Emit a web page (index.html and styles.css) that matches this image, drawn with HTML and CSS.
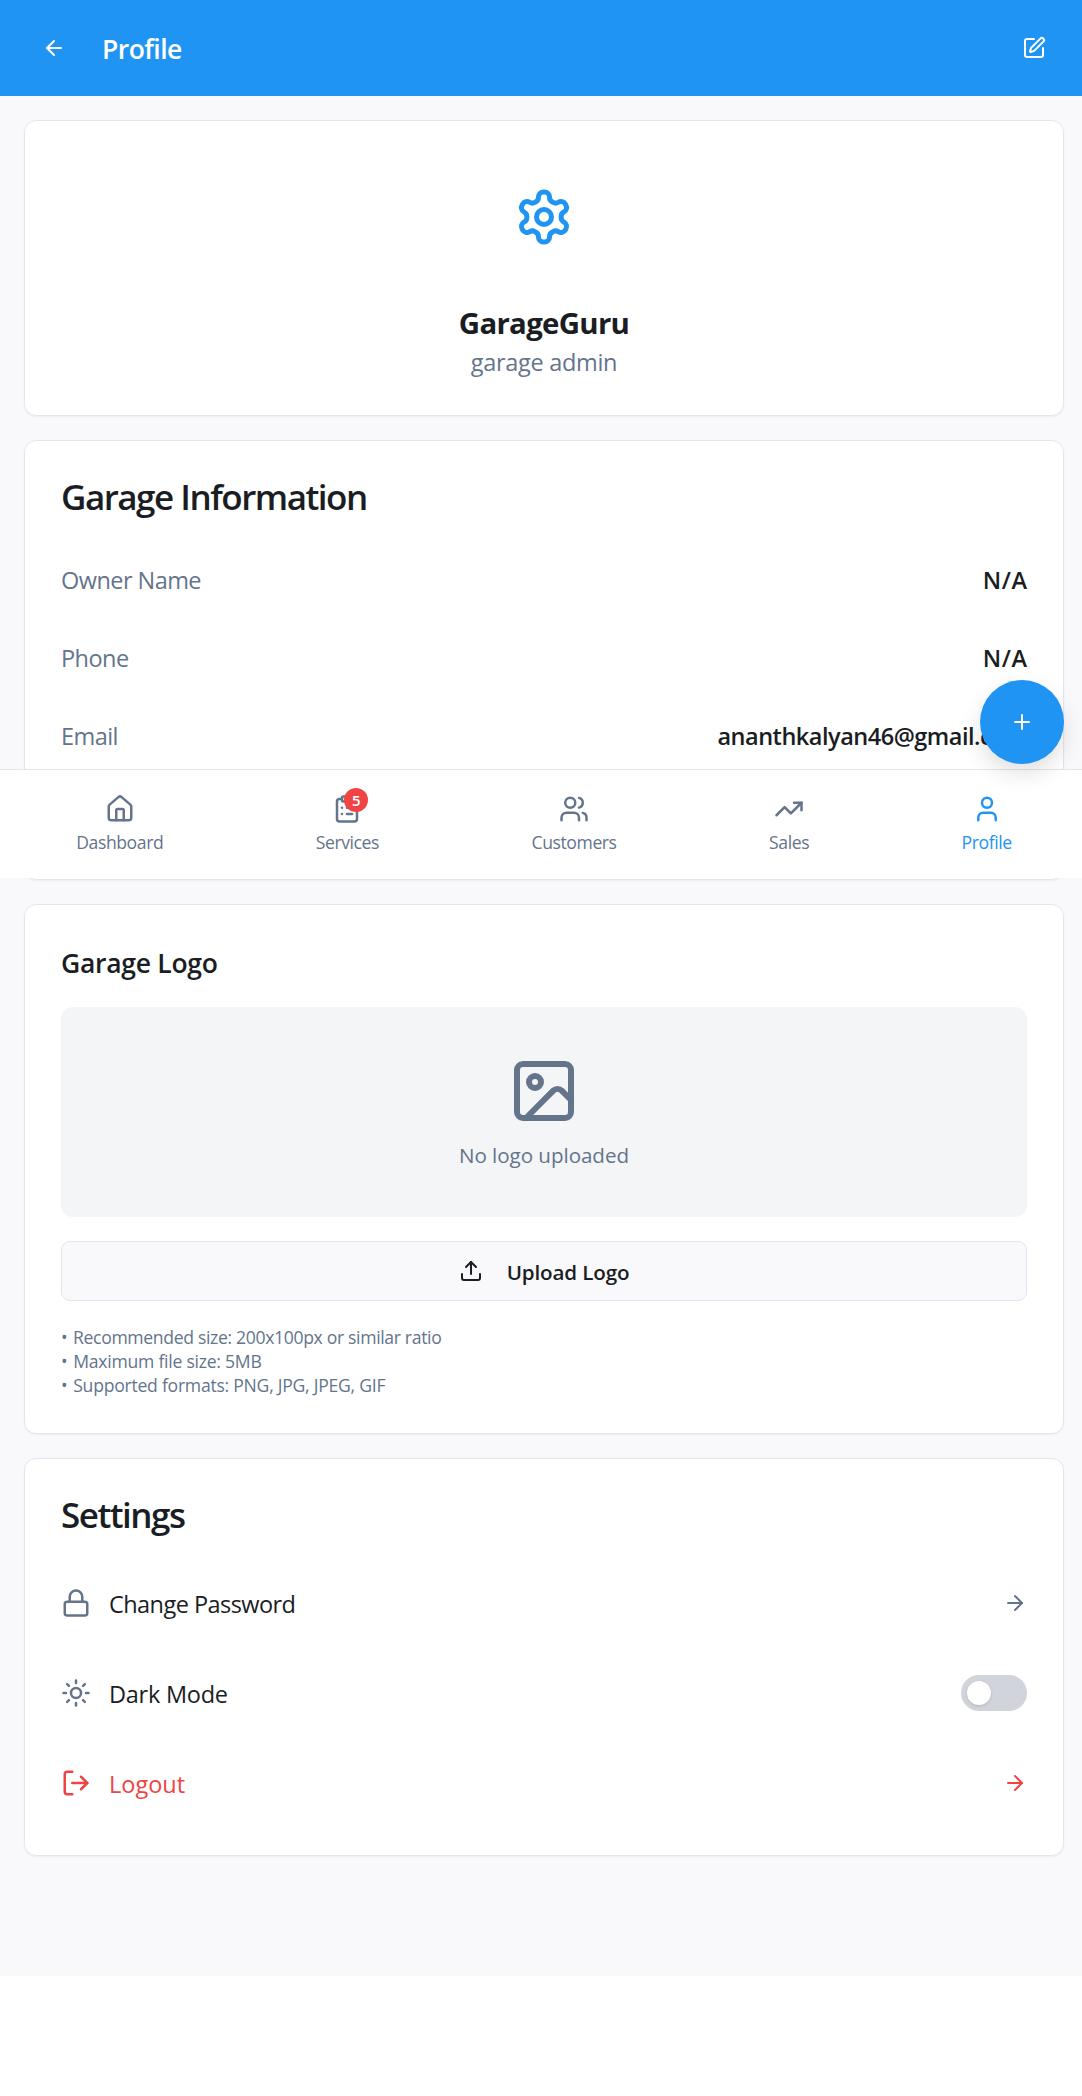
FILE: index.html
```html
<!DOCTYPE html>
<html lang="en">
<head>
<meta charset="utf-8">
<title>GarageGuru – Profile</title>
<link rel="stylesheet" href="styles.css">
</head>
<body>
<div class="app">
  <header class="topbar">
    <div class="topbar-left">
      <button class="icon-btn" aria-label="Back">
        <svg class="icon icon-sm" viewBox="0 0 24 24"><path d="m12 19-7-7 7-7"/><path d="M19 12H5"/></svg>
      </button>
      <h1 class="topbar-title">Profile</h1>
    </div>
    <button class="icon-btn" aria-label="Edit">
      <svg class="icon icon-sm" viewBox="0 0 24 24"><path d="M12 3H5a2 2 0 0 0-2 2v14a2 2 0 0 0 2 2h14a2 2 0 0 0 2-2v-7"/><path d="M18.375 2.625a1 1 0 0 1 3 3l-9.013 9.014a2 2 0 0 1-.853.505l-2.873.84a.5.5 0 0 1-.62-.62l.84-2.873a2 2 0 0 1 .506-.852z"/></svg>
    </button>
  </header>

  <main class="content">
    <section class="card identity">
      <div class="avatar">
        <svg class="icon icon-xl" viewBox="0 0 24 24"><path d="M12.22 2h-.44a2 2 0 0 0-2 2v.18a2 2 0 0 1-1 1.73l-.43.25a2 2 0 0 1-2 0l-.15-.08a2 2 0 0 0-2.73.73l-.22.38a2 2 0 0 0 .73 2.73l.15.1a2 2 0 0 1 1 1.72v.51a2 2 0 0 1-1 1.74l-.15.09a2 2 0 0 0-.73 2.73l.22.38a2 2 0 0 0 2.73.73l.15-.08a2 2 0 0 1 2 0l.43.25a2 2 0 0 1 1 1.73V20a2 2 0 0 0 2 2h.44a2 2 0 0 0 2-2v-.18a2 2 0 0 1 1-1.73l.43-.25a2 2 0 0 1 2 0l.15.08a2 2 0 0 0 2.73-.73l.22-.39a2 2 0 0 0-.73-2.73l-.15-.08a2 2 0 0 1-1-1.74v-.5a2 2 0 0 1 1-1.74l.15-.09a2 2 0 0 0 .73-2.73l-.22-.38a2 2 0 0 0-2.73-.73l-.15.08a2 2 0 0 1-2 0l-.43-.25a2 2 0 0 1-1-1.73V4a2 2 0 0 0-2-2z"/><circle cx="12" cy="12" r="3"/></svg>
      </div>
      <h2 class="identity-name">GarageGuru</h2>
      <p class="identity-role">garage admin</p>
    </section>

    <section class="card">
      <h3 class="card-title">Garage Information</h3>
      <dl class="info">
        <div class="info-row"><dt>Owner Name</dt><dd class="short">N/A</dd></div>
        <div class="info-row"><dt>Phone</dt><dd class="short">N/A</dd></div>
        <div class="info-row"><dt>Email</dt><dd>ananthkalyan46@gmail.com</dd></div>
        <div class="info-row"></div>
      </dl>
    </section>

    <section class="card">
      <h3 class="sub-title">Garage Logo</h3>
      <div class="logo-empty">
        <svg class="icon icon-2xl" viewBox="0 0 24 24"><rect width="18" height="18" x="3" y="3" rx="2"/><circle cx="9" cy="9" r="2"/><path d="m21 15-3.086-3.086a2 2 0 0 0-2.828 0L6 21"/></svg>
        <p>No logo uploaded</p>
      </div>
      <button class="upload">
        <svg class="icon icon-sm" viewBox="0 0 24 24"><path d="M12 3v12"/><path d="m17 8-5-5-5 5"/><path d="M21 15v4a2 2 0 0 1-2 2H5a2 2 0 0 1-2-2v-4"/></svg>
        <span>Upload Logo</span>
      </button>
      <div class="hints">
        <p class="hint-long"><span class="bullet">•</span> Recommended size: 200x100px or similar ratio</p>
        <p><span class="bullet">•</span> Maximum file size: 5MB</p>
        <p><span class="bullet">•</span> Supported formats: PNG, JPG, JPEG, GIF</p>
      </div>
    </section>

    <section class="card">
      <h3 class="card-title">Settings</h3>
      <div class="settings">
        <div class="setting">
          <svg class="icon icon-md" viewBox="0 0 24 24"><rect width="18" height="11" x="3" y="11" rx="2"/><path d="M7 11V7a5 5 0 0 1 10 0v4"/></svg>
          <span class="setting-label tight">Change Password</span>
          <svg class="icon icon-sm" viewBox="0 0 24 24"><path d="M5 12h14"/><path d="m12 5 7 7-7 7"/></svg>
        </div>
        <div class="setting">
          <svg class="icon icon-md" viewBox="0 0 24 24"><circle cx="12" cy="12" r="4"/><path d="M12 2v2"/><path d="M12 20v2"/><path d="m4.93 4.93 1.41 1.41"/><path d="m17.66 17.66 1.41 1.41"/><path d="M2 12h2"/><path d="M20 12h2"/><path d="m6.34 17.66-1.41 1.41"/><path d="m19.07 4.93-1.41 1.41"/></svg>
          <span class="setting-label">Dark Mode</span>
          <span class="toggle"><span class="knob"></span></span>
        </div>
        <div class="setting danger">
          <svg class="icon icon-md" viewBox="0 0 24 24"><path d="M9 21H5a2 2 0 0 1-2-2V5a2 2 0 0 1 2-2h4"/><path d="m16 17 5-5-5-5"/><path d="M21 12H9"/></svg>
          <span class="setting-label loose">Logout</span>
          <svg class="icon icon-sm" viewBox="0 0 24 24"><path d="M5 12h14"/><path d="m12 5 7 7-7 7"/></svg>
        </div>
      </div>
    </section>
  </main>

  <nav class="tabbar">
    <a class="tab">
      <svg class="icon icon-md" viewBox="0 0 24 24"><path d="M15 21v-8a1 1 0 0 0-1-1h-4a1 1 0 0 0-1 1v8"/><path d="M3 10a2 2 0 0 1 .709-1.528l7-5.999a2 2 0 0 1 2.582 0l7 5.999A2 2 0 0 1 21 10v9a2 2 0 0 1-2 2H5a2 2 0 0 1-2-2z"/></svg>
      <span>Dashboard</span>
    </a>
    <a class="tab">
      <span class="tab-icon">
        <svg class="icon icon-md" viewBox="0 0 24 24"><rect width="8" height="4" x="8" y="2" rx="1"/><path d="M16 4h2a2 2 0 0 1 2 2v14a2 2 0 0 1-2 2H6a2 2 0 0 1-2-2V6a2 2 0 0 1 2-2h2"/><path d="M12 11h4M12 16h4M8 11h.01M8 16h.01"/></svg>
        <span class="badge">5</span>
      </span>
      <span>Services</span>
    </a>
    <a class="tab">
      <svg class="icon icon-md" viewBox="0 0 24 24"><path d="M16 21v-2a4 4 0 0 0-4-4H6a4 4 0 0 0-4 4v2"/><circle cx="9" cy="7" r="4"/><path d="M22 21v-2a4 4 0 0 0-3-3.87"/><path d="M16 3.13a4 4 0 0 1 0 7.75"/></svg>
      <span>Customers</span>
    </a>
    <a class="tab">
      <svg class="icon icon-md" viewBox="0 0 24 24"><path d="M16 7h6v6"/><path d="m22 7-8.5 8.5-5-5L2 17"/></svg>
      <span>Sales</span>
    </a>
    <a class="tab active">
      <svg class="icon icon-md" viewBox="0 0 24 24"><path d="M19 21v-2a4 4 0 0 0-4-4H9a4 4 0 0 0-4 4v2"/><circle cx="12" cy="7" r="4"/></svg>
      <span>Profile</span>
    </a>
  </nav>

  <button class="fab" aria-label="Add">
    <svg class="icon icon-sm" viewBox="0 0 24 24"><path d="M5 12h14"/><path d="M12 5v14"/></svg>
  </button>
</div>
</body>
</html>
```
FILE: styles.css
```css
:root {
  --primary: #2094f3;
  --bg: #f9f9fb;
  --text: #1a1d23;
  --muted: #64748b;
  --border: #e1e7ef;
  --danger: #ef4444;
}

* { box-sizing: border-box; margin: 0; padding: 0; }

html { overflow: hidden; background: #fff; }

body {
  font-family: "Open Sans", "Noto Sans", sans-serif;
  font-size: 23.5px;
  line-height: 36px;
  color: var(--text);
}

button { font: inherit; color: inherit; border: 0; background: none; }

.app {
  position: relative;
  width: 1088px;
  height: 1976px;
  background: var(--bg);
}

.icon {
  display: block;
  flex: none;
  fill: none;
  stroke: currentColor;
  stroke-width: 2;
  stroke-linecap: round;
  stroke-linejoin: round;
}
.icon-sm { width: 24px; height: 24px; }
.icon-md { width: 30px; height: 30px; }
.icon-xl { width: 60px; height: 60px; }
.icon-2xl { width: 72px; height: 72px; }

/* header */
.topbar {
  display: flex;
  align-items: center;
  justify-content: space-between;
  height: 96px;
  padding: 0 24px;
  background: var(--primary);
  color: #fff;
}
.topbar-left { display: flex; align-items: center; gap: 18px; }
.icon-btn { display: grid; place-items: center; width: 60px; height: 60px; }
.topbar-title {
  padding-top: 2px;
  font-size: 26.5px;
  font-weight: 600;
  line-height: 42px;
  letter-spacing: -0.55px;
}

/* cards */
.content { display: flex; flex-direction: column; gap: 24px; padding: 24px; }
.card {
  padding: 36px;
  background: #fff;
  border: 1px solid var(--border);
  border-radius: 12px;
  box-shadow: 0 1px 2px rgba(0, 0, 0, 0.05);
}
.card-title {
  padding-top: 4px;
  font-size: 35px;
  font-weight: 600;
  line-height: 32px;
  letter-spacing: -1.5px;
}

.identity { display: flex; flex-direction: column; align-items: center; }
.avatar {
  display: grid;
  place-items: center;
  width: 120px;
  height: 120px;
  margin-bottom: 24px;
  color: var(--primary);
}
.identity-name {
  padding-top: 2px;
  font-size: 29.4px;
  font-weight: 700;
  line-height: 40px;
  letter-spacing: -0.7px;
}
.identity-role { padding-top: 2px; line-height: 34px; color: var(--muted); letter-spacing: -0.3px; }

.info { display: flex; flex-direction: column; gap: 18px; padding-top: 36px; }
.info-row { display: flex; justify-content: space-between; height: 60px; padding: 13px 0 11px; }
.info-row dt { color: var(--muted); letter-spacing: -0.55px; }
.info-row dd { font-weight: 600; letter-spacing: -0.48px; }
.info-row .short { letter-spacing: 0.6px; margin-right: -0.6px; }

.sub-title {
  padding-top: 2px;
  font-size: 26.5px;
  font-weight: 600;
  line-height: 40px;
  letter-spacing: -0.28px;
  margin-bottom: 24px;
}
.logo-empty {
  display: flex;
  flex-direction: column;
  align-items: center;
  gap: 12px;
  padding: 48px;
  border-radius: 12px;
  background: #f3f5f7;
  color: var(--muted);
  font-size: 20.6px;
  line-height: 30px;
}
.logo-empty p { padding-top: 2px; line-height: 28px; letter-spacing: -0.05px; }
.upload {
  display: flex;
  align-items: center;
  justify-content: center;
  gap: 24px;
  width: 100%;
  height: 60px;
  margin: 24px 0;
  border: 1px solid var(--border);
  border-radius: 9px;
  background: var(--bg);
  font-size: 20.6px;
  font-weight: 600;
  letter-spacing: -0.15px;
}
.upload span { padding-top: 1px; }
.hints {
  color: var(--muted);
  font-size: 17.6px;
  line-height: 24px;
  letter-spacing: -0.25px;
}
.hint-long { letter-spacing: -0.34px; }
.bullet { margin-right: 1.5px; }

.settings { display: flex; flex-direction: column; gap: 18px; padding-top: 36px; }
.setting { display: flex; align-items: center; gap: 18px; height: 72px; color: var(--muted); }
.setting-label { flex: 1; padding-top: 2px; color: var(--text); letter-spacing: -0.25px; }
.setting-label.tight { letter-spacing: -0.55px; }
.setting-label.loose { letter-spacing: 0; }
.danger, .danger .setting-label { color: var(--danger); }
.toggle {
  width: 66px;
  height: 36px;
  padding: 6px;
  border-radius: 18px;
  background: #d1d5db;
}
.knob {
  display: block;
  width: 24px;
  height: 24px;
  border-radius: 50%;
  background: #fff;
  box-shadow: 0 1px 3px rgba(0, 0, 0, 0.15);
}

/* tab bar pinned over the page */
.tabbar {
  position: absolute;
  top: 769px;
  left: 0;
  display: flex;
  justify-content: space-around;
  width: 100%;
  height: 109px;
  padding: 24px 0;
  border-top: 1px solid var(--border);
  background: #fff;
}
.tab {
  display: flex;
  flex-direction: column;
  align-items: center;
  gap: 6px;
  color: var(--muted);
  font-size: 17.6px;
  line-height: 24px;
  letter-spacing: -0.42px;
}
.tab.active { color: var(--primary); }
.tab-icon { position: relative; }
.badge {
  position: absolute;
  top: -6px;
  right: -6px;
  width: 24px;
  height: 24px;
  border-radius: 50%;
  background: var(--danger);
  color: #fff;
  font-size: 15px;
  font-weight: 600;
  text-align: center;
  letter-spacing: 0;
}

.fab {
  position: absolute;
  top: 680px;
  right: 24px;
  display: grid;
  place-items: center;
  width: 84px;
  height: 84px;
  border-radius: 50%;
  background: var(--primary);
  color: #fff;
  box-shadow: 0 10px 22px rgba(0, 0, 0, 0.12);
}
```
